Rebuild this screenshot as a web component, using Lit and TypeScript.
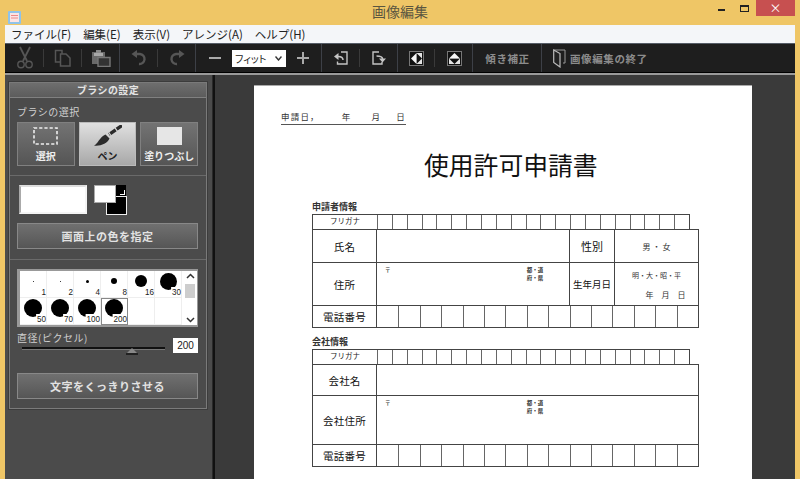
import { LitElement, html, css, svg } from "lit";
import { customElement } from "lit/decorators.js";

const ic = (w: number, h: number, body: unknown) =>
  html`<svg width=${w} height=${h} viewBox="0 0 ${w} ${h}" fill="none">${body}</svg>`;

const D = "#565656";
const L = "#c4c4c4";

const scissors = ic(18, 24, svg`
  <path d="M4 1 L11 15 M14 1 L7 15" stroke=${D} stroke-width="1.8"/>
  <circle cx="5" cy="18.5" r="3.2" stroke=${D} stroke-width="1.4"/>
  <circle cx="13" cy="18.5" r="3.2" stroke=${D} stroke-width="1.4"/>`);
const copy = ic(18, 18, svg`
  <path d="M1.5 1.5 H8 V13 H1.5 Z" stroke=${D} stroke-width="1.5"/>
  <path d="M6.5 5 H12 L16 9 V17 H6.5 Z" fill="#1e1e1e" stroke=${D} stroke-width="1.5"/>`);
const paste = ic(20, 18, svg`
  <path d="M1 3 H14 V15 H1 Z" fill="#6a6a6a"/>
  <path d="M5 1 H10 V5 H5 Z" fill="#8a8a8a"/>
  <path d="M3 4 H12 V7 H3 Z" fill="#a8a8a8"/>
  <path d="M7 8.5 H19 V17.5 H7 Z" fill="#333" stroke="#777" stroke-width="1.4"/>`);
const undo = ic(16, 16, svg`
  <path d="M5 4 H9 A5 5 0 1 1 8 14" stroke=${D} stroke-width="2.4"/>
  <path d="M0.5 4 L6 0 V8 Z" fill=${D}/>`);
const redo = ic(16, 16, svg`
  <path d="M11 4 H7 A5 5 0 1 0 8 14" stroke=${D} stroke-width="2.4"/>
  <path d="M15.5 4 L10 0 V8 Z" fill=${D}/>`);
const minus = ic(12, 12, svg`<path d="M0 6 H12" stroke="#aaa" stroke-width="2"/>`);
const plus = ic(12, 12, svg`<path d="M0 6 H12 M6 0 V12" stroke="#aaa" stroke-width="2"/>`);
const rotL = ic(14, 14, svg`
  <path d="M7 1 H13 V13 H3.5 V10.5" stroke=${L} stroke-width="1.4"/>
  <path d="M9 9 C9 6 7 5.5 4 5.5" stroke=${L} stroke-width="1.5"/>
  <path d="M0 5.5 L4.5 2 V9 Z" fill=${L}/>`);
const rotR = ic(14, 14, svg`
  <path d="M7 1 H1 V13 H10 V11" stroke=${L} stroke-width="1.4"/>
  <path d="M4.5 5 C8 5 10.5 5.5 10.5 8" stroke=${L} stroke-width="1.5"/>
  <path d="M7 7.5 H14 L10.5 11.5 Z" fill=${L}/>`);
const flipH = ic(15, 15, svg`
  <rect x="0.5" y="0.5" width="14" height="14" fill="#111" stroke="#777"/>
  <rect x="7.5" y="2" width="5.5" height="11" fill="#e4e4e4"/>
  <path d="M7.5 2 L13 7.5 L7.5 13 Z" fill="#111"/>
  <path d="M2 7.5 L7.5 2 V13 Z" fill="#f4f4f4"/>`);
const flipV = ic(15, 15, svg`
  <rect x="0.5" y="0.5" width="14" height="14" fill="#111" stroke="#777"/>
  <rect x="2" y="7.5" width="11" height="5.5" fill="#e4e4e4"/>
  <path d="M2 7.5 L7.5 13 L13 7.5 Z" fill="#111"/>
  <path d="M2 7.5 L7.5 2 L13 7.5 Z" fill="#f4f4f4"/>`);
const door = ic(13, 19, svg`
  <path d="M0.5 1 H12 V14 H10" stroke="#999" stroke-width="1"/>
  <path d="M0.7 1 L7 4.5 V18 L0.7 13.5 Z" fill="#222" stroke="#bbb" stroke-width="1.2"/>`);

const pen = html`<svg width="28" height="22" viewBox="0 0 28 22">
  <path d="M28 0.5 L15 9.5" stroke="#2b2b2b" stroke-width="3.4" stroke-dasharray="6.5 1.2"/>
  <path d="M11.5 9.5 L15.5 13.5 C13.5 18.5 6 21.5 0 20.5 C4 19 5 12.5 11.5 9.5 Z" fill="#2b2b2b"/>
</svg>`;
const dashed = html`<svg width="25" height="18" viewBox="0 0 25 18">
  <rect x="1" y="1" width="23" height="16" fill="none" stroke="#eee" stroke-width="1.6" stroke-dasharray="3.2 2"/>
</svg>`;

const brushes: [number, string, boolean?][] = [
  [1, "1"], [1, "2"], [3, "4"], [6, "8"], [12, "16"], [17, "30"],
  [18, "50"], [18, "70"], [18, "100"], [18, "200", true], [0, ""], [0, ""],
];

@customElement("app-root")
export class AppRoot extends LitElement {
  static styles = css`
    :host {
      display: block; width: 800px; height: 479px; overflow: hidden;
      background: #efc666; font-family: "Noto Sans CJK JP", "Liberation Sans", sans-serif;
    }
    .titlebar { height: 25px; display: flex; position: relative; align-items: flex-start; }
    .appicon { position: absolute; left: 8px; top: 5px; }
    .title { flex: 1; text-align: center; font-size: 14px; line-height: 22px; color: #5a5540; padding-left: 89px; }
    .winbtns { display: flex; align-items: flex-start; margin-right: 5px; }
    .wb { display: flex; align-items: center; justify-content: center; }
    .wb.min { width: 20px; height: 20px; margin-right: 3px; }
    .wb.min i { display: block; width: 7px; height: 2px; background: #222; }
    .wb.max { width: 20px; height: 16px; margin-right: 2px; }
    .wb.max i { display: block; width: 7px; height: 4px; border: 1px solid #222; border-top-width: 2px; }
    .wb.close { width: 39px; height: 16px; background: #c75050; color: #fff; font-size: 12px; line-height: 16px; }
    .win { margin: 0 5px; height: 454px; display: flex; flex-direction: column; }
    .menu {
      height: 18px; background: #f4f6f9; display: flex; gap: 12px; padding-left: 6px;
      font-size: 11.5px; line-height: 18px; color: #222; flex: none; white-space: nowrap;
    }
    .toolbar {
      height: 30px; flex: none; background: #1e1e1e; display: flex;
      border-top: 1px solid #555c66; box-sizing: border-box;
      border-bottom: 1px solid #000;
    }
    .t { display: flex; align-items: center; justify-content: center; position: relative; flex: none; }
    .t::after { content: ""; position: absolute; right: 0; top: 5px; bottom: 5px; width: 1px; background: #3a3a3a; }
    .t.last::after { display: none; }
    .t.strong::after { top: 0; bottom: 0; background: #3d4047; }
    .zoom { gap: 11px; }
    .select {
      width: 54px; height: 17px; background: #fff; color: #222; font-size: 10px; line-height: 17px;
      display: flex; justify-content: space-between; padding: 0 4px 0 3px; box-sizing: border-box;
      white-space: nowrap; font-feature-settings: "palt";
    }
    .select svg { align-self: center; flex: none; }
    .ttext { color: #8c8c8c; font-size: 10.5px; font-weight: 700; letter-spacing: 0.6px; white-space: nowrap; }
    .exit { padding-left: 11px; gap: 4px; }
    .body { flex: 1; min-height: 0; display: flex; border-top: 2px solid #9a9a9a; background: #4b4b4b; }
    .side { width: 208px; flex: none; padding: 7px 5px 0 4px; box-sizing: border-box; background: #4b4b4b; border-right: 1px solid #2a2a2a; }
    .panel { border: 1px solid #7a7a7a; box-shadow: 0 0 0 1px #3c3c3c; height: 327px; box-sizing: border-box; display: flex; flex-direction: column; }
    .phead {
      height: 14px; flex: none; background: linear-gradient(#6e6e6e, #5c5c5c); border-bottom: 1px solid #808080;
      color: #e4e4e4; font-size: 10px; font-weight: 700; line-height: 14px; text-align: center; letter-spacing: 0.4px;
    }
    .sec { padding: 0 8px 0 7px; }
    .sec.a { height: 78px; flex: none; border-bottom: 1px solid #6a6a6a; box-sizing: border-box; padding-top: 7px; }
    .lbl { color: #cfcfcf; font-size: 10px; line-height: 14px; letter-spacing: 0.5px; }
    .modes { display: flex; gap: 4px; margin-top: 3px; }
    .mode {
      flex: 1; min-width: 0; height: 44px; box-sizing: border-box; border: 1px solid #808080;
      background: linear-gradient(#737373, #555); color: #eee; font-size: 10px; font-weight: 700;
      display: flex; flex-direction: column; align-items: center; justify-content: flex-end; line-height: 13px; padding-bottom: 3px; white-space: nowrap;
    }
    .mode.on { background: linear-gradient(#e0e0e0, #a8a8a8); color: #222; border-color: #bbb; }
    .mode .ico { height: 26px; display: flex; align-items: center; justify-content: center; }
    .solid { width: 25px; height: 18px; background: #e6e6e6; }
    .sec.b { height: 84px; flex: none; border-bottom: 1px solid #6a6a6a; box-sizing: border-box; padding-top: 9px; }
    .colors { display: flex; gap: 7px; margin-left: 2px; height: 30px; }
    .swatch { width: 68px; height: 29px; background: #fff; box-sizing: border-box; border: 2px solid; border-color: #ddd #f4f4f4 #f4f4f4 #aaa; }
    .pair { width: 33px; height: 30px; position: relative; }
    .bgc { position: absolute; right: 0; bottom: 0; width: 21px; height: 19px; background: #000; border: 1px solid #eee; box-sizing: border-box; }
    .fgc { position: absolute; left: 0; top: 0; width: 22px; height: 18px; background: #fff; border: 1px solid #aaa; box-sizing: border-box; }
    .swapc { position: absolute; right: 1px; top: 0; width: 10px; height: 12px; background: #000; }
    .swapc::after { content: ""; position: absolute; right: 1px; bottom: 2px; width: 4px; height: 4px; border: solid #fff; border-width: 0 1.5px 1.5px 0; }
    .btn {
      height: 26px; box-sizing: border-box; border: 1px solid #888; background: linear-gradient(#707070, #565656);
      color: #e2e2e2; font-size: 11px; font-weight: 700; line-height: 24px; text-align: center; letter-spacing: 0.5px;
    }
    .btn.c { margin-top: 8px; }
    .btn.d { margin-top: 16px; }
    .sec.c { padding-top: 9px; flex: 1; }
    .list { height: 58px; border: 1px solid #999; border-width: 2px 1px 2px 3px; box-sizing: border-box; background: #fff; display: flex; }
    .cells { width: 163px; display: grid; grid-template-columns: repeat(6, 27px); grid-auto-rows: 27px; align-content: start; }
    .cell { position: relative; display: flex; align-items: center; justify-content: center; box-sizing: border-box; border-right: 1px solid #eee; border-bottom: 1px solid #eee; padding-bottom: 6px; }
    .cell.sel { outline: 1px solid #888; outline-offset: -1px; }
    .dot { display: block; border-radius: 50%; background: #000; }
    .num { position: absolute; right: 0; bottom: 0; font-size: 9px; line-height: 10px; color: #222; background: #fff; padding-left: 1px; font-family: "Liberation Sans", sans-serif; transform: scaleX(0.9); transform-origin: right; white-space: nowrap; }
    .scroll { flex: 1; display: flex; flex-direction: column; align-items: center; justify-content: space-between; padding: 2px 0; }
    .thumb { width: 10px; height: 14px; background: #cdcdcd; margin-top: -6px; margin-bottom: 8px; }
    .slider { display: flex; margin-top: 5px; height: 25px; }
    .sl { width: 154px; }
    .track { height: 2px; background: #111; margin: 3px 0 0 5px; width: 143px; border-bottom: 1px solid #777; position: relative; }
    .tri { position: absolute; left: 104px; top: 1px; }
    .sl .lbl { line-height: 12px; }
    .num-in { width: 25px; height: 15px; margin: 6px 0 0 3px; background: #fff; color: #222; font-size: 10px; line-height: 15px; text-align: center; font-family: "Liberation Sans", sans-serif; }
    .main { flex: 1; background: #3a3a3a; border-left: 2px solid #111; padding: 10px 0 0 39px; overflow: hidden; min-width: 0; }
    .paper { width: 498px; height: 420px; background: #fff; border-top: 1px solid #aaa; box-sizing: border-box; padding: 26px 0 0 27px; color: #222; font-family: "Liberation Serif", "Noto Sans CJK JP", serif; }
    .date { width: 125px; height: 12px; border-bottom: 1px solid #555; font-size: 8.5px; line-height: 11px; display: flex; color: #333; letter-spacing: 1.2px; white-space: nowrap; }
    .date .y { margin-left: 22px; }
    .date .m { margin-left: 20px; }
    .date .d { margin-left: 15px; }
    .h1 { margin: 26px 0 0 143px; font-size: 24.8px; line-height: 32px; color: #111; white-space: nowrap; }
    .form { margin-left: 31px; }
    .form.first { margin-top: 17px; }
    .form.second { margin-top: 7px; }
    .cap { font-size: 9px; line-height: 14px; font-weight: 700; color: #333; height: 14px; }
    .furi { width: 378px; height: 15px; display: grid; grid-template-columns: 64px repeat(21, 1fr); border: 1px solid #444; border-bottom: none; box-sizing: border-box; }
    .furi > div { border-left: 1px solid #666; }
    .furi > div:first-child { border-left: none; font-size: 7.5px; line-height: 14px; text-align: center; }
    .tbl { width: 387px; border: 1px solid #444; box-sizing: border-box; display: flex; flex-direction: column; }
    .row { display: flex; border-bottom: 1px solid #444; box-sizing: border-box; }
    .row:last-child { border-bottom: none; }
    .r33 { height: 33px; }
    .r43 { height: 43px; }
    .r21 { height: 21px; }
    .r31 { height: 31px; }
    .r49 { height: 49px; }
    .rl { width: 64px; flex: none; display: flex; align-items: center; justify-content: center; font-size: 10.5px; border-right: 1px solid #444; box-sizing: border-box; letter-spacing: 0.2px; white-space: nowrap; color: #111; }
    .fill { flex: 1; }
    .fill.w { width: 193px; flex: none; border-right: 1px solid #444; box-sizing: border-box; }
    .addr { display: flex; justify-content: space-between; font-size: 5.5px; line-height: 8px; padding: 3px 0 0 8px; box-sizing: border-box; font-weight: 700; color: #333; }
    .addr .pref { text-align: center; width: 20px; }
    .a1 { width: 193px; flex: none; border-right: 1px solid #444; padding-right: 24px; }
    .a2 { flex: 1; padding-right: 153px; }
    .rl2 { width: 45px; flex: none; display: flex; align-items: center; justify-content: center; border-right: 1px solid #444; box-sizing: border-box; font-size: 11px; color: #111; white-space: nowrap; }
    .rl2.s { font-size: 9.5px; }
    .v { flex: 1; display: flex; flex-direction: column; align-items: center; justify-content: center; font-size: 8px; color: #333; white-space: pre; }
    .v.dob { font-size: 7px; gap: 9px; padding-top: 2px; }
    .v.dob span + span { font-size: 8px; padding-left: 18px; }
    .tel { flex: 1; display: grid; grid-template-columns: repeat(15, 1fr); }
    .tel > div { border-left: 1px solid #666; }
    .tel > div:first-child { border-left: none; }
  `;

  private furi() {
    return html`<div class="furi"><div>フリガナ</div>${Array.from({ length: 21 }, () => html`<div></div>`)}</div>`;
  }
  private tel() {
    return html`<div class="row r21"><div class="rl">電話番号</div>
      <div class="tel">${Array.from({ length: 15 }, () => html`<div></div>`)}</div></div>`;
  }

  render() {
    return html`
      <div class="titlebar">
        <div class="appicon">
          <svg width="13" height="13" viewBox="0 0 13 13">
            <rect width="13" height="13" rx="1" fill="#8fc3ea"/>
            <rect x="2" y="2" width="9" height="9" fill="#fbe4e4"/>
            <path d="M3 4.5 H10 M3 7 H10" stroke="#e88" stroke-width="1"/>
          </svg>
        </div>
        <div class="title">画像編集</div>
        <div class="winbtns">
          <div class="wb min"><i></i></div>
          <div class="wb max"><i></i></div>
          <div class="wb close">×</div>
        </div>
      </div>
      <div class="win">
        <div class="menu">
          <span>ファイル(F)</span><span>編集(E)</span><span>表示(V)</span><span>アレンジ(A)</span><span>ヘルプ(H)</span>
        </div>
        <div class="toolbar">
          <div class="t" style="width:39px">${scissors}</div>
          <div class="t" style="width:38px">${copy}</div>
          <div class="t strong" style="width:38px">${paste}</div>
          <div class="t" style="width:38px">${undo}</div>
          <div class="t strong" style="width:38px">${redo}</div>
          <div class="t strong zoom" style="width:126px">
            ${minus}
            <div class="select"><span>フィット</span>
              <svg width="7" height="5" viewBox="0 0 7 5"><path d="M0.5 0.5 L3.5 4 L6.5 0.5" stroke="#333" stroke-width="1.4" fill="none"/></svg>
            </div>
            ${plus}
          </div>
          <div class="t" style="width:38px">${rotL}</div>
          <div class="t strong" style="width:38px">${rotR}</div>
          <div class="t" style="width:37px">${flipH}</div>
          <div class="t strong" style="width:38px">${flipV}</div>
          <div class="t strong ttext" style="width:69px">傾き補正</div>
          <div class="t last ttext exit">${door}<span>画像編集の終了</span></div>
        </div>
        <div class="body">
          <div class="side">
            <div class="panel">
              <div class="phead">ブラシの設定</div>
              <div class="sec a">
                <div class="lbl">ブラシの選択</div>
                <div class="modes">
                  <div class="mode"><div class="ico">${dashed}</div>選択</div>
                  <div class="mode on"><div class="ico">${pen}</div>ペン</div>
                  <div class="mode"><div class="ico"><div class="solid"></div></div>塗りつぶし</div>
                </div>
              </div>
              <div class="sec b">
                <div class="colors">
                  <div class="swatch"></div>
                  <div class="pair"><div class="swapc"></div><div class="bgc"></div><div class="fgc"></div></div>
                </div>
                <div class="btn c">画面上の色を指定</div>
              </div>
              <div class="sec c">
                <div class="list">
                  <div class="cells">
                    ${brushes.map(([d, n, sel]) => html`
                      <div class="cell ${sel ? "sel" : ""}">
                        ${d ? html`<span class="dot" style="width:${d}px;height:${d}px"></span>` : ""}
                        ${n ? html`<span class="num">${n}</span>` : ""}
                      </div>`)}
                  </div>
                  <div class="scroll">
                    <svg width="9" height="6" viewBox="0 0 9 6"><path d="M1 5 L4.5 1.5 L8 5" stroke="#333" stroke-width="1.5" fill="none"/></svg>
                    <div class="thumb"></div>
                    <svg width="9" height="6" viewBox="0 0 9 6"><path d="M1 1 L4.5 4.5 L8 1" stroke="#333" stroke-width="1.5" fill="none"/></svg>
                  </div>
                </div>
                <div class="slider">
                  <div class="sl">
                    <div class="lbl">直径(ピクセル)</div>
                    <div class="track">
                      <svg class="tri" width="12" height="7" viewBox="0 0 12 7"><path d="M6 0 L11 5 H1 Z" fill="#888"/><path d="M0 6 H12" stroke="#111" stroke-width="1.4"/></svg>
                    </div>
                  </div>
                  <div class="num-in">200</div>
                </div>
                <div class="btn d">文字をくっきりさせる</div>
              </div>
            </div>
          </div>
          <div class="main">
            <div class="paper">
              <div class="date"><span>申請日，</span><span class="y">年</span><span class="m">月</span><span class="d">日</span></div>
              <div class="h1">使用許可申請書</div>
              <div class="form first">
                <div class="cap">申請者情報</div>
                ${this.furi()}
                <div class="tbl">
                  <div class="row r33">
                    <div class="rl">氏名</div>
                    <div class="fill w"></div>
                    <div class="rl2">性別</div>
                    <div class="v">男 ・ 女</div>
                  </div>
                  <div class="row r43">
                    <div class="rl">住所</div>
                    <div class="addr a1"><span>〒</span><span class="pref">都・道<br />府・県</span></div>
                    <div class="rl2 s">生年月日</div>
                    <div class="v dob"><span>明・大・昭・平</span><span>年    月    日</span></div>
                  </div>
                  ${this.tel()}
                </div>
              </div>
              <div class="form second">
                <div class="cap">会社情報</div>
                ${this.furi()}
                <div class="tbl">
                  <div class="row r31"><div class="rl">会社名</div><div class="fill"></div></div>
                  <div class="row r49">
                    <div class="rl">会社住所</div>
                    <div class="addr a2"><span>〒</span><span class="pref">都・道<br />府・県</span></div>
                  </div>
                  ${this.tel()}
                </div>
              </div>
            </div>
          </div>
        </div>
      </div>
    `;
  }
}
